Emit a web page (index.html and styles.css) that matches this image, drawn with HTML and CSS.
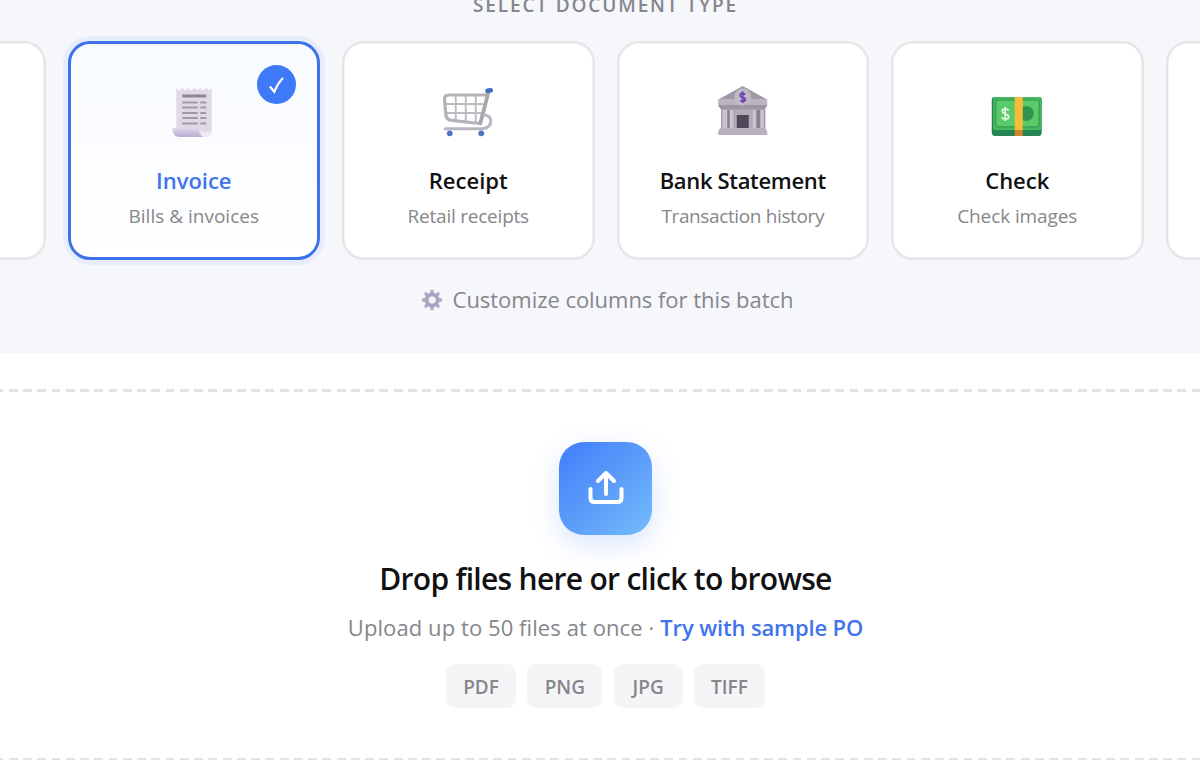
FILE: index.html
```html
<!DOCTYPE html>
<html lang="en">
<head>
<meta charset="utf-8">
<title>Upload documents</title>
<link rel="stylesheet" href="styles.css">
</head>
<body>
<section class="types">
  <h2 class="types-label">SELECT DOCUMENT TYPE</h2>
  <div class="cards">
    <div class="card"></div>
    <div class="card selected">
      <span class="badge"><svg width="39" height="39" viewBox="0 0 39 39"><path d="M12.800 21.500 17.300 26.800C19.500 21.500 22 17 26 13" fill="none" stroke="#fff" stroke-width="2.200"/></svg></span>
      <svg class="icon" viewBox="-1.250 0 90 80">
        <defs>
          <linearGradient id="roll" x1="0" y1="0" x2="0" y2="1"><stop offset="0" stop-color="#e0d7ec"/><stop offset="1" stop-color="#b9abd2"/></linearGradient>
        </defs>
        <path d="M26 18l3 2.500 3-2.500 3 2.500 3-2.500 3 2.500 3-2.500 3 2.500 3-2.500 3 2.500 3-2.500 3 2.500 2.500-2.500V60q0 7-7 7H35L26 60z" fill="#dfdae6"/>
        <path d="M22 58H49q1 8 6 9H30q-8 0-8-9z" fill="url(#roll)"/>
        <path d="M49 58q-.5 8 5 9.300Q61 67 61.500 59q-4 4-8 3-4-1-4.500-4z" fill="#eee9f3"/>
        <path d="M32 26H56" stroke="#8b8594" stroke-width="3"/>
        <path d="M32 32.500H47.500M50 32.500H56M32 37.500H47.500M50 37.500H56M32 43H47.500M50 43H56M32 48H47.500M50 48H56M32 53.500H47.500M50 53.500H56" stroke="#9f98ab" stroke-width="1.900"/>
      </svg>
      <h3 class="name">Invoice</h3>
      <p class="desc">Bills &amp; invoices</p>
    </div>
    <div class="card">
      <svg class="icon" viewBox="-1.750 0 90 80" fill="none" stroke-linejoin="round" stroke-linecap="round">
        <path d="M31 26V51M41 26V52M51 26V52M21 34H58M21 43H56" stroke="#bdbbc1" stroke-width="1.900"/>
        <path d="M62 25H24q-4.500 0-4.200 4.500l1.300 15q.5 5.500 6 5.800L55 53.500" stroke="#b4b2b8" stroke-width="3.200"/>
        <path d="M64 21 55.500 53.500" stroke="#a9a7ae" stroke-width="3.800"/>
        <path d="M60 45q6 1 6 6 0 7-8 7.700H20.500" stroke="#b9b6bf" stroke-width="3"/>
        <path d="M62.800 20.800 66 20.300" stroke="#426db8" stroke-width="4.600"/>
        <circle cx="25" cy="63.300" r="2.900" fill="#4b76bf"/><circle cx="56.500" cy="63.300" r="2.900" fill="#4b76bf"/>
      </svg>
      <h3 class="name">Receipt</h3>
      <p class="desc d2">Retail receipts</p>
    </div>
    <div class="card">
      <svg class="icon" viewBox="-2.250 0 90 80">
        <path d="M21 39H65V60H21z" fill="#88818f"/>
        <path d="M22 40h5v19h-5zM29.500 40h4v19h-4zM52 40h4v19h-4zM60 40h4v19h-4z" fill="#c9c3ce"/>
        <path d="M34 40H52V60H34z" fill="#b2abb8"/>
        <path d="M36.500 45H48.500V59H36.500z" fill="#4e4858"/>
        <path d="M19 29 42.500 16 66 29z" fill="#a099a9"/>
        <path d="M18 29H67V36L64 40H21L18 36z" fill="#bbb5c2"/>
        <path d="M18 35H67L64 39.500H21z" fill="#9c95a5"/>
        <path d="M20 58H65L67 61V65H18V61z" fill="#b8b1c0"/>
        <circle cx="42.500" cy="27" r="8.500" fill="#c0bac7"/>
        <path d="M42.500 21.500V33M45 24.500Q40 22 40 25.500 40 27 42.500 27.500 45.200 28 45 29.800 44 32.500 40 30.500" fill="none" stroke="#7043b6" stroke-width="1.900"/>
      </svg>
      <h3 class="name n3">Bank Statement</h3>
      <p class="desc d3">Transaction history</p>
    </div>
    <div class="card">
      <svg class="icon" viewBox="2.250 0 90 80">
        <path d="M22 30q0-3 3-3H69q3 0 3 3V62q0 4-3 4H25q-3 0-3-4z" fill="#278553"/>
        <rect x="23.500" y="27" width="48.500" height="33" rx="2.500" fill="#45b861"/>
        <rect x="26" y="29.800" width="43.500" height="27" rx="2.500" fill="#5ac968" stroke="#359c50" stroke-width="1.200"/>
        <circle cx="56.500" cy="43.500" r="7.500" fill="#309350"/>
        <path d="M45 27H53V60H45z" fill="#f8bd38"/><path d="M45 60H53V66H45z" fill="#d48728"/>
        <path d="M35.500 37V51M39 40.500Q38 38.800 35.500 38.800 32.500 38.800 32.500 41.200 32.500 43 35.500 43.900 39 44.800 39 47 39 49.200 35.500 49.200 32.800 49.200 32 47.200" fill="none" stroke="#e4f6e3" stroke-width="1.700"/>
      </svg>
      <h3 class="name">Check</h3>
      <p class="desc d4">Check images</p>
    </div>
    <div class="card"></div>
  </div>
  <div class="customize">
    <svg class="gear" viewBox="0 0 22 22">
      <path d="M11 2.500V19.500M2.500 11H19.500M5 5 17 17M17 5 5 17" stroke="#b7acc8" stroke-width="3.800" stroke-linecap="round"/>
      <circle cx="11" cy="11" r="5.500" fill="#dedae7" stroke="#aca1be" stroke-width="3.600"/>
      <circle cx="11.500" cy="11" r="3.200" fill="#f4f5fa"/>
    </svg>
    <span class="customize-text">Customize columns for this batch</span>
  </div>
</section>
<section class="drop">
  <div class="upload">
    <svg width="40" height="40" viewBox="0 0 40 40" fill="none" stroke="#fff" stroke-width="4" stroke-linecap="round" stroke-linejoin="round"><path d="M20 26V5.500M12 13 20 5 28 13M4.500 21V30q0 4 4 4H31.500q4 0 4-4V21"/></svg>
  </div>
  <h1 class="title">Drop files here or click to browse</h1>
  <p class="sub"><span class="lead">Upload up to 50 files at once ·</span><a class="link">Try with sample PO</a></p>
  <div class="chips"><span class="chip c1">PDF</span><span class="chip c2">PNG</span><span class="chip c3">JPG</span><span class="chip c4">TIFF</span></div>
</section>
</body>
</html>
```
FILE: styles.css
```css
* { box-sizing: border-box; margin: 0; padding: 0; }
body { width: 1200px; height: 760px; overflow: hidden; background: #fff; font-family: "Open Sans", "Noto Sans", sans-serif; color: #111113; }
h1, h2, h3 { font-weight: 600; }
.types { height: 353px; padding-left: 11px; background: #f5f7fb; overflow: hidden; display: flex; flex-direction: column; align-items: center; }
.types-label { flex: none; height: 51px; margin-top: -10px; line-height: 30px; font-size: 19px; letter-spacing: 1.87px; color: #86868b; white-space: nowrap; }
.cards { flex: none; display: flex; gap: 22px; }
.card { position: relative; flex: none; width: 252.5px; height: 219px; border: 2.5px solid #e4e5e7; box-shadow: inset 0 0 0 0.5px #e4e5e7; border-radius: 22px; background: #fff; display: flex; flex-direction: column; align-items: center; padding-top: 27px; }
.card.selected { border-color: #3c72ea; border-width: 3px; padding-top: 26px; background: linear-gradient(#f7faff, #fff); box-shadow: 0 0 0 5px #e7edfc; }
.badge { position: absolute; top: 21px; right: 21px; width: 39px; height: 39px; border-radius: 50%; background: #3e79f7; }
.badge svg { display: block; }
.icon { flex: none; width: 90px; height: 80px; }
.name { height: 35px; margin-top: 15px; line-height: 30px; font-size: 22px; white-space: nowrap; }
.n3 { letter-spacing: -0.33px; }
.selected .name { color: #3f74ec; }
.desc { margin-top: 1px; line-height: 30px; font-size: 19px; color: #86868b; white-space: nowrap; }
.d2 { letter-spacing: -0.22px; }
.d3 { letter-spacing: -0.37px; }
.d4 { letter-spacing: -0.1px; }
.customize { flex: none; margin-top: 24px; margin-left: 3px; display: flex; align-items: center; gap: 10px; height: 30px; font-size: 22px; letter-spacing: -0.04px; color: #86868b; white-space: nowrap; }
.gear { width: 22px; height: 22px; margin-top: 1px; }
.drop { position: relative; height: 407px; padding: 88.5px 0 0 11px; display: flex; flex-direction: column; align-items: center; }
.drop::before, .drop::after { content: ""; position: absolute; left: 0; right: 0; height: 2.5px; background: repeating-linear-gradient(90deg, #e2e3e6 0 8.75px, transparent 8.75px 14.25px) -5.25px 0 / 1425px 100%; }
.drop::before { top: 36px; }
.drop::after { bottom: -0.5px; }
.upload { width: 93px; height: 93px; border-radius: 25px; background: linear-gradient(135deg, #427cfb, #74bcf9); box-shadow: 0 9px 28px rgba(62, 121, 247, .2); display: grid; place-items: center; }
.title { margin-top: 23.5px; line-height: 42px; font-size: 30px; letter-spacing: -0.7px; white-space: nowrap; }
.sub { margin-top: 11px; line-height: 32px; font-size: 22px; display: flex; gap: 6px; color: #86868b; white-space: nowrap; }
.lead { letter-spacing: 0.08px; }
.link { font-weight: 600; letter-spacing: -0.14px; color: #3f74ec; }
.chips { margin-top: 20.5px; display: flex; gap: 11.3px; }
.chip { height: 44px; border-radius: 9px; background: #f5f5f7; color: #86868b; font-size: 19px; font-weight: 600; line-height: 46px; text-align: center; }
.c1 { width: 70px; } .c2 { width: 75px; } .c3 { width: 69px; } .c4 { width: 71px; }
```
